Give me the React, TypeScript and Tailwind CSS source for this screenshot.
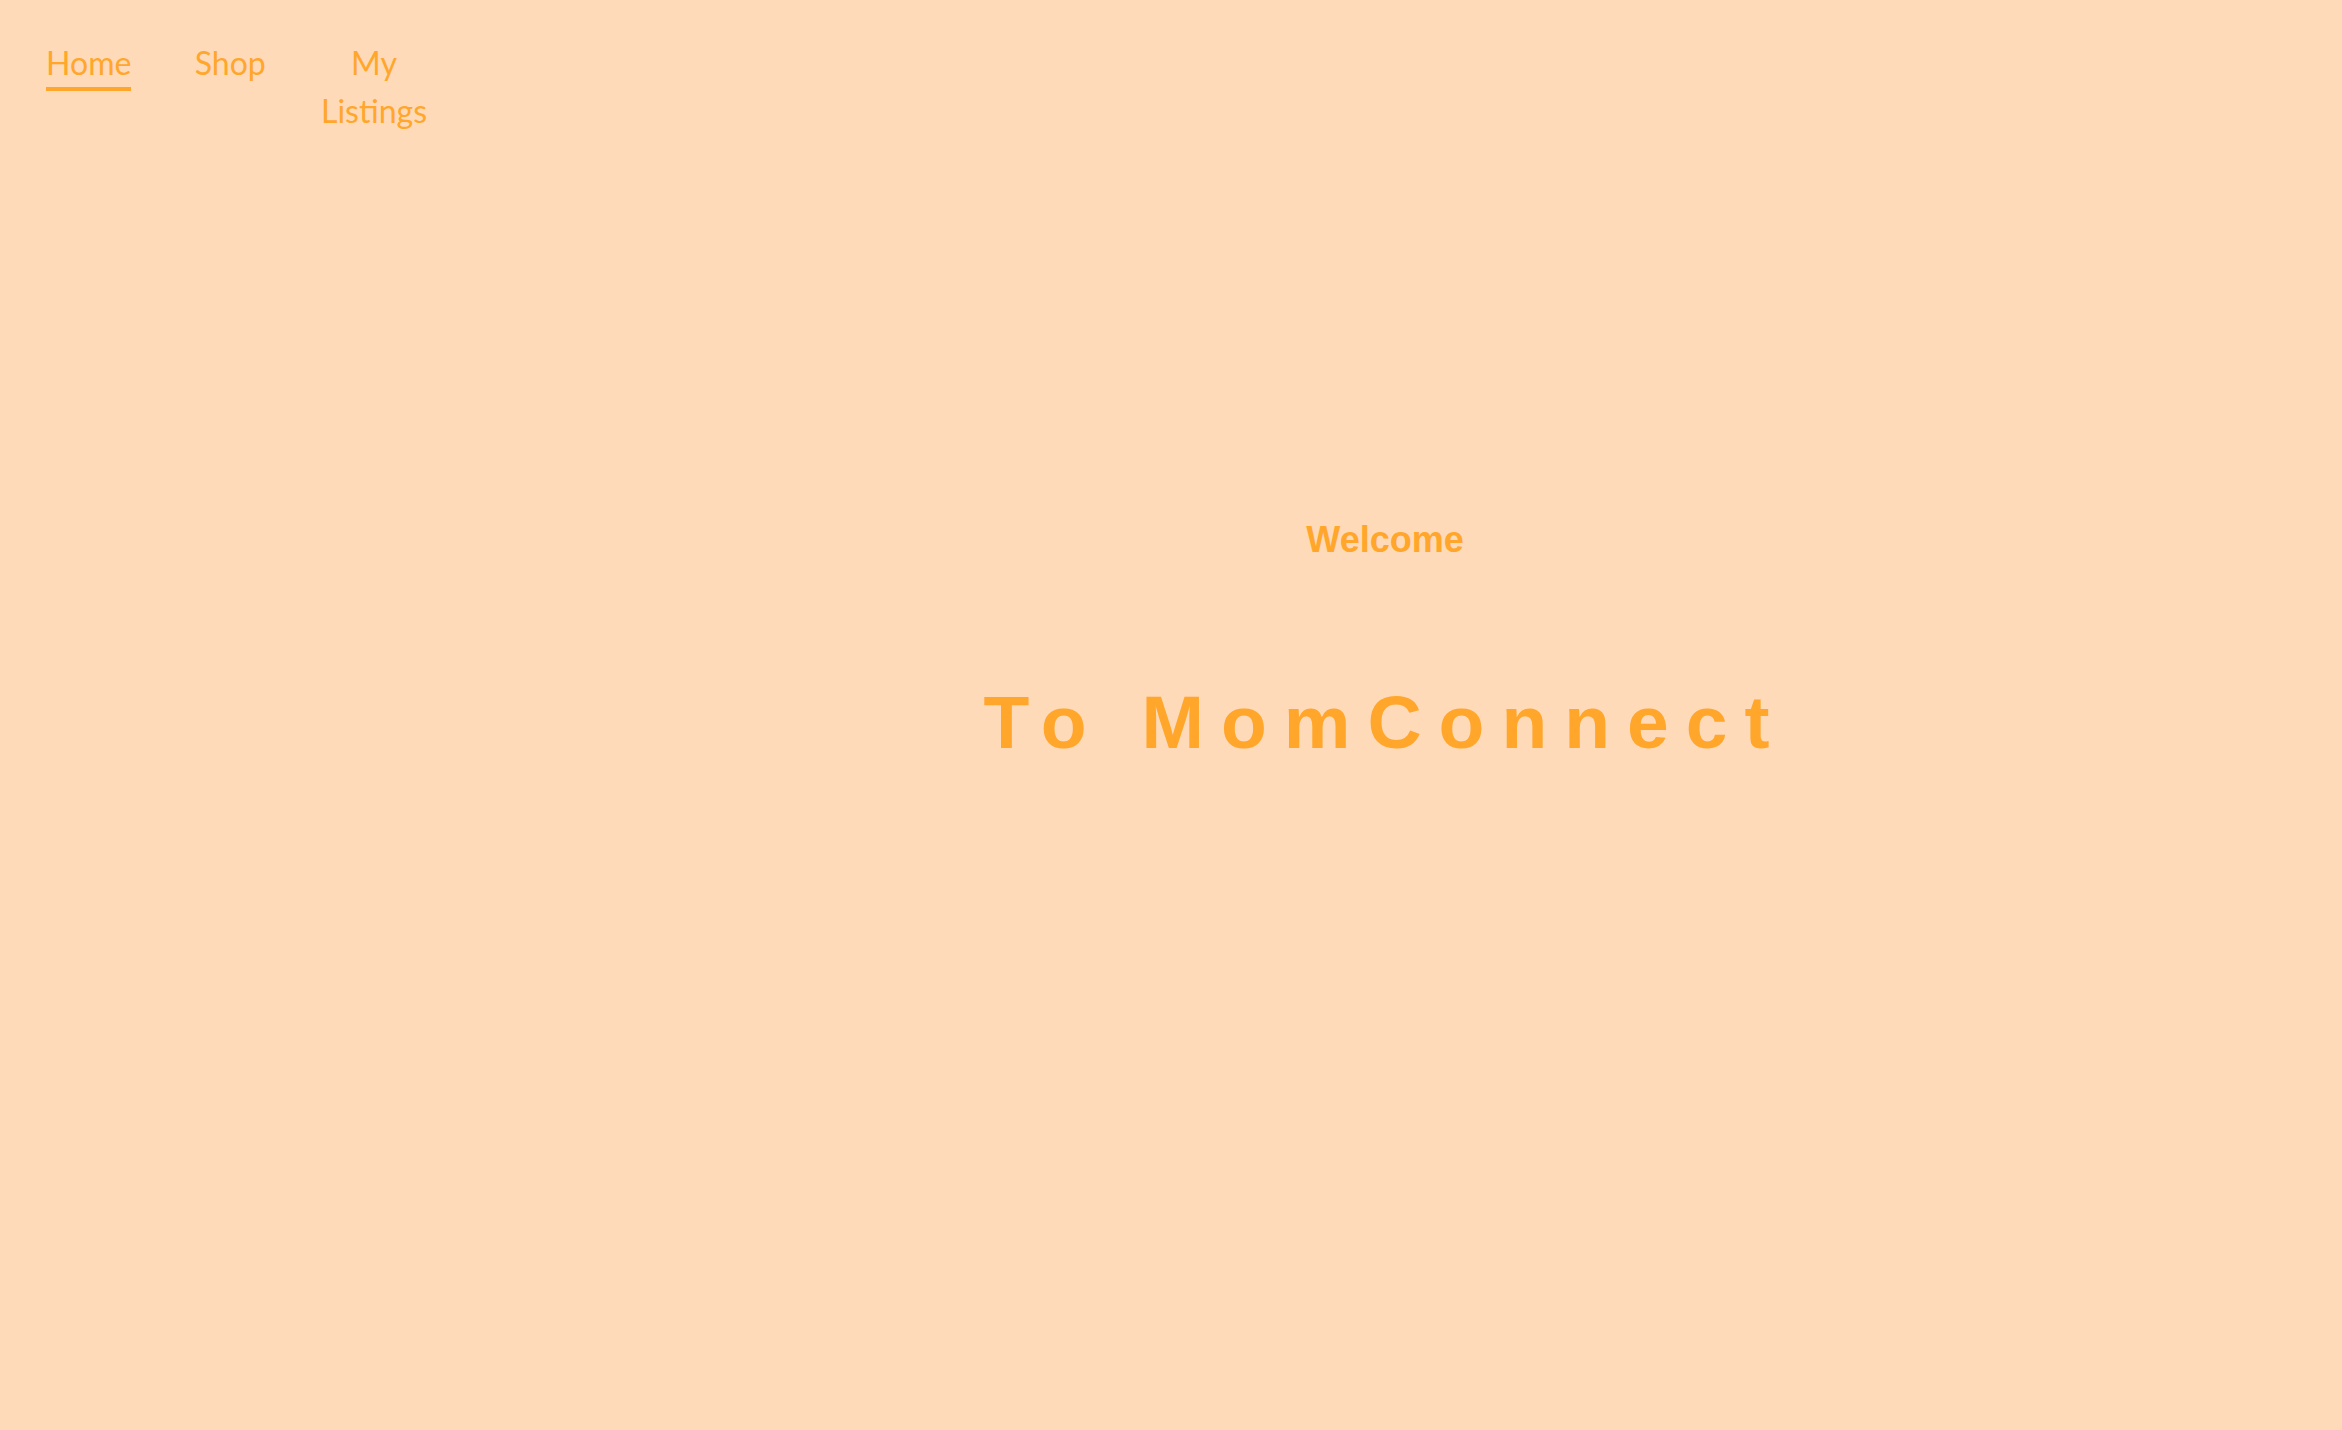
const links = [
  { label: "Home", active: true },
  { label: "Shop", active: false },
  { label: "My Listings", active: false },
];

function Sidebar() {
  return (
    <nav className="w-[428px] shrink-0 pt-[39px]">
      <ul className="flex pl-[18px]">
        {links.map((link) => (
          <li
            key={link.label}
            className="w-[141.5px] shrink-0 text-center px-[20px]"
          >
            <a
              href="#"
              className={`inline-block text-[32px] leading-[48px] text-[#ffa62b] font-['Lato',sans-serif] ${
                link.active ? "border-b-4 border-[#ffa62b]" : ""
              }`}
            >
              {link.label}
            </a>
          </li>
        ))}
      </ul>
    </nav>
  );
}

function Hero() {
  return (
    <main className="flex-1 flex flex-col items-center pt-[522px] font-['Liberation_Sans',Arial,sans-serif] text-[#ffa62b]">
      <h2 className="text-[36px] leading-none font-bold">Welcome</h2>
      <h1 className="mt-[127px] text-[75px] leading-none font-bold tracking-[17px]">
        To MomConnect
      </h1>
    </main>
  );
}

export default function App() {
  return (
    <div className="min-h-screen bg-[#ffdab9] flex">
      <Sidebar />
      <Hero />
    </div>
  );
}
